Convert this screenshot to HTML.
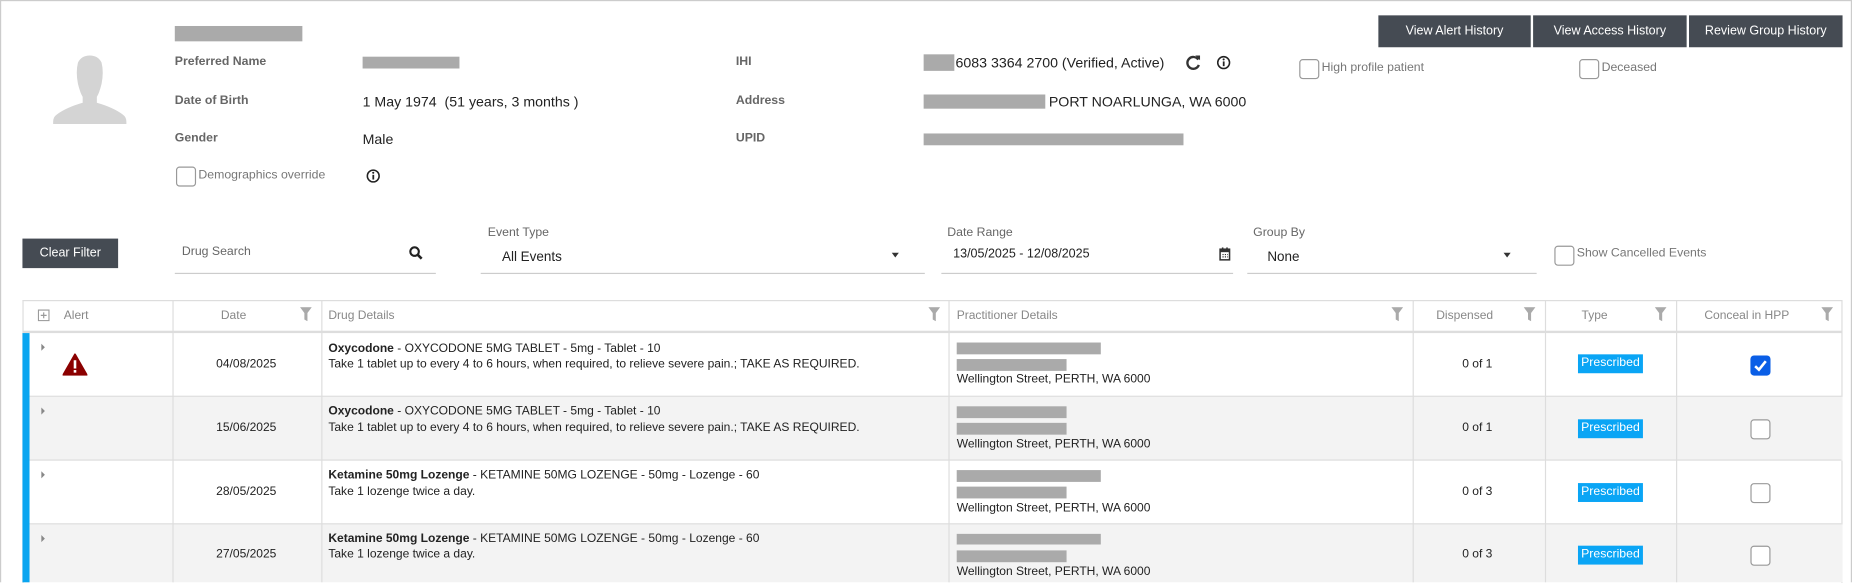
<!DOCTYPE html>
<html><head><meta charset="utf-8"><style>
*{margin:0;padding:0;box-sizing:border-box}
html,body{width:1852px;height:582px;overflow:hidden;background:#fff}
#w{position:absolute;left:0;top:0;width:1568px;height:493px;transform:scale(1.18112);transform-origin:0 0;font-family:"Liberation Sans",Arial,sans-serif;font-size:10.4px;color:#222}
.a{position:absolute;white-space:nowrap}
.bar{position:absolute;background:#aaa}
.lbl{position:absolute;font-weight:bold;color:#666;font-size:10.4px;white-space:nowrap}
.val{position:absolute;font-size:12px;color:#222;white-space:nowrap}
.btn{position:absolute;background:#454b53;color:#fff;font-size:10.6px;text-align:center;line-height:27px;top:13px;height:27px}
.cb{position:absolute;width:17px;height:17px;border:1px solid #999;border-radius:3px;background:#fff}
.cbt{position:absolute;font-size:10.4px;color:#777;white-space:nowrap}
.ul{position:absolute;height:1px;background:#ccc;top:231px}
.fl{position:absolute;font-size:10.4px;color:#666}
.col{position:absolute;top:254px;bottom:0;width:1px;background:#ddd}
.hd{position:absolute;top:262px;color:#888;font-size:10.2px}
.fi{position:absolute;top:260px;width:10px;height:12px}
.row{position:absolute;left:19px;width:1540px;border-top:1px solid #ddd}
.d{position:absolute;font-size:10.2px;color:#222;white-space:nowrap}
.badge{position:absolute;left:1336px;width:55px;height:16px;background:#0aa5f5;color:#fff;font-size:10.4px;text-align:center;line-height:16px}
</style></head><body><div id="w">
<div class="a" style="left:0;top:0;width:1568px;height:493px;border:1px solid #ccc;border-bottom:none"></div>
<div class="bar" style="left:148px;top:22px;width:108px;height:13px"></div>
<svg class="a" style="left:44px;top:41px" width="64" height="64" viewBox="0 0 64 64"><path fill="#d4d4d4" d="M22 30 Q20 20 22 12 Q25 6 32 6 Q39 6 42 12 Q44 20 42 30 Q40 38 38 41 L38 46 Q52 50 60 56 Q63 58 63 62 L63 64 L1 64 L1 62 Q1 58 4 56 Q12 50 26 46 L26 41 Q24 38 22 30Z"/></svg>
<div class="lbl" style="left:148px;top:47px">Preferred Name</div>
<div class="lbl" style="left:148px;top:80px">Date of Birth</div>
<div class="lbl" style="left:148px;top:112px">Gender</div>
<div class="bar" style="left:307px;top:48px;width:82px;height:10px"></div>
<div class="val" style="left:307px;top:79px">1 May 1974&nbsp; (51 years, 3 months )</div>
<div class="val" style="left:307px;top:111px">Male</div>
<div class="cb" style="left:149px;top:141px"></div>
<div class="cbt" style="left:168px;top:143px">Demographics override</div>
<svg class="a" style="left:310px;top:143px" width="12" height="12" viewBox="0 0 12 12"><circle cx="6" cy="6" r="5" fill="none" stroke="#222" stroke-width="1.3"/><rect x="5.3" y="5" width="1.5" height="4" fill="#222"/><circle cx="6" cy="3.3" r=".9" fill="#222"/></svg>
<div class="lbl" style="left:623px;top:47px">IHI</div>
<div class="lbl" style="left:623px;top:80px">Address</div>
<div class="lbl" style="left:623px;top:112px">UPID</div>
<div class="bar" style="left:782px;top:46px;width:26px;height:14px"></div>
<div class="val" style="left:809px;top:46px">6083 3364 2700 (Verified, Active)</div>
<svg class="a" style="left:1004px;top:46px" width="13" height="14" viewBox="0 0 13 14"><path d="M10.5 4.5 A5 5 0 1 0 11 9" fill="none" stroke="#333" stroke-width="2"/><path d="M8 1 L12 1 L12 5Z" fill="#333"/></svg>
<svg class="a" style="left:1030px;top:47px" width="12" height="12" viewBox="0 0 12 12"><circle cx="6" cy="6" r="5" fill="none" stroke="#222" stroke-width="1.3"/><rect x="5.3" y="5" width="1.5" height="4" fill="#222"/><circle cx="6" cy="3.3" r=".9" fill="#222"/></svg>
<div class="bar" style="left:782px;top:80px;width:103px;height:12px"></div>
<div class="val" style="left:888px;top:79px">PORT NOARLUNGA, WA 6000</div>
<div class="bar" style="left:782px;top:113px;width:220px;height:10px"></div>
<div class="cb" style="left:1100px;top:50px"></div>
<div class="cbt" style="left:1119px;top:52px">High profile patient</div>
<div class="cb" style="left:1337px;top:50px"></div>
<div class="cbt" style="left:1356px;top:52px">Deceased</div>
<div class="btn" style="left:1167px;width:129px">View Alert History</div>
<div class="btn" style="left:1298px;width:130px">View Access History</div>
<div class="btn" style="left:1430px;width:130px">Review Group History</div>
<div class="btn" style="left:19px;top:202px;width:81px;height:25px;line-height:25px">Clear Filter</div>
<div class="fl" style="left:154px;top:208px;color:#666">Drug Search</div>
<svg class="a" style="left:346px;top:208px" width="12" height="12" viewBox="0 0 12 12"><circle cx="5" cy="5" r="3.6" fill="none" stroke="#222" stroke-width="1.8"/><path d="M7.5 7.5 L11 11" stroke="#222" stroke-width="2.2"/></svg>
<div class="ul" style="left:148px;width:221px"></div>
<div class="fl" style="left:413px;top:192px">Event Type</div>
<div class="val" style="left:425px;top:212px;font-size:11.4px">All Events</div>
<div class="a" style="left:755px;top:214px;border:3.5px solid transparent;border-top:4px solid #333;width:0;height:0"></div>
<div class="ul" style="left:407px;width:376px"></div>
<div class="fl" style="left:802px;top:192px">Date Range</div>
<div class="val" style="left:807px;top:209px;font-size:10.6px">13/05/2025 - 12/08/2025</div>
<svg class="a" style="left:1032px;top:209px" width="10" height="12" viewBox="0 0 10 12"><rect x="1" y="2" width="8" height="9" fill="none" stroke="#333" stroke-width="1.3"/><rect x="1" y="2" width="8" height="2.5" fill="#333"/><rect x="2.5" y="0.5" width="1.3" height="2.5" fill="#333"/><rect x="6.2" y="0.5" width="1.3" height="2.5" fill="#333"/><path d="M3 6.5h1M5 6.5h1M7 6.5h.6M3 8.5h1M5 8.5h1M7 8.5h.6" stroke="#333"/></svg>
<div class="ul" style="left:797px;width:247px"></div>
<div class="fl" style="left:1061px;top:192px">Group By</div>
<div class="val" style="left:1073px;top:212px;font-size:11.4px">None</div>
<div class="a" style="left:1273px;top:214px;border:3.5px solid transparent;border-top:4px solid #333;width:0;height:0"></div>
<div class="ul" style="left:1056px;width:245px"></div>
<div class="cb" style="left:1316px;top:208px"></div>
<div class="cbt" style="left:1335px;top:209px">Show Cancelled Events</div>

<div class="a" style="left:19px;top:254px;width:1541px;height:240px;border:1px solid #ddd;border-bottom:none"></div>
<div class="a" style="left:19px;top:280px;width:1541px;height:2px;background:#ddd"></div>
<div class="a" style="left:19px;top:336px;width:1541px;height:54px;background:#f3f3f3"></div>
<div class="a" style="left:19px;top:444px;width:1541px;height:49px;background:#f3f3f3"></div>
<div class="row" style="top:335px"></div><div class="row" style="top:389px"></div><div class="row" style="top:443px"></div>
<div class="col" style="left:146px"></div><div class="col" style="left:272px"></div><div class="col" style="left:803px"></div><div class="col" style="left:1196px"></div><div class="col" style="left:1308px"></div><div class="col" style="left:1419px"></div>
<div class="a" style="left:19px;top:282px;width:6px;height:211px;background:#0aa5f0"></div>
<svg class="a" style="left:32px;top:262px" width="10" height="10" viewBox="0 0 10 10"><rect x=".5" y=".5" width="9" height="9" fill="none" stroke="#999"/><path d="M5 2.5v5M2.5 5h5" stroke="#999"/></svg>
<div class="hd" style="left:54px">Alert</div>
<div class="hd" style="left:187px">Date</div>
<div class="hd" style="left:278px">Drug Details</div>
<div class="hd" style="left:810px">Practitioner Details</div>
<div class="hd" style="left:1216px">Dispensed</div>
<div class="hd" style="left:1339px">Type</div>
<div class="hd" style="left:1443px">Conceal in HPP</div>
<svg width="0" height="0" style="position:absolute"><defs><symbol id="f" viewBox="0 0 10 12"><path d="M0 0H10L6.3 5V12L3.7 10.5V5Z" fill="#aaa"/></symbol></defs></svg>
<svg class="fi" style="left:254px"><use href="#f"/></svg>
<svg class="fi" style="left:786px"><use href="#f"/></svg>
<svg class="fi" style="left:1178px"><use href="#f"/></svg>
<svg class="fi" style="left:1290px"><use href="#f"/></svg>
<svg class="fi" style="left:1401px"><use href="#f"/></svg>
<svg class="fi" style="left:1542px"><use href="#f"/></svg>
<svg class="a" style="left:53px;top:299px" width="21" height="19" viewBox="0 0 21 19"><path d="M10.5 1 L20.5 18.5 L0.5 18.5Z" fill="#8b0000" stroke="#8b0000" stroke-linejoin="round" stroke-width="1.5"/><rect x="9.4" y="6" width="2.2" height="7" fill="#fff"/><rect x="9.4" y="14.3" width="2.2" height="2.2" fill="#fff"/></svg>

<div class="a" style="left:35px;top:291px;border:3px solid transparent;border-left:3.5px solid #888;width:0;height:0"></div>
<div class="d" style="left:183px;top:303px">04/08/2025</div>
<div class="d" style="left:278px;top:290px"><b>Oxycodone</b> - OXYCODONE 5MG TABLET - 5mg - Tablet - 10</div>
<div class="d" style="left:278px;top:303px">Take 1 tablet up to every 4 to 6 hours, when required, to relieve severe pain.; TAKE AS REQUIRED.</div>
<div class="bar" style="left:810px;top:290px;width:122px;height:10px"></div>
<div class="bar" style="left:810px;top:304px;width:93px;height:10px"></div>
<div class="d" style="left:810px;top:316px">Wellington Street, PERTH, WA 6000</div>
<div class="d" style="left:1238px;top:303px">0 of 1</div>
<div class="badge" style="top:300px">Prescribed</div>
<div class="a" style="left:1482px;top:301px;width:17px;height:17px;background:#0a5ee6;border-radius:3px"></div>
<svg class="a" style="left:1482px;top:301px" width="17" height="17" viewBox="0 0 17 17"><path d="M4 9 L7.2 12 L13 4.8" fill="none" stroke="#fff" stroke-width="2.2"/></svg>

<div class="a" style="left:35px;top:345px;border:3px solid transparent;border-left:3.5px solid #888;width:0;height:0"></div>
<div class="d" style="left:183px;top:357px">15/06/2025</div>
<div class="d" style="left:278px;top:343px"><b>Oxycodone</b> - OXYCODONE 5MG TABLET - 5mg - Tablet - 10</div>
<div class="d" style="left:278px;top:357px">Take 1 tablet up to every 4 to 6 hours, when required, to relieve severe pain.; TAKE AS REQUIRED.</div>
<div class="bar" style="left:810px;top:344px;width:93px;height:10px"></div>
<div class="bar" style="left:810px;top:358px;width:93px;height:10px"></div>
<div class="d" style="left:810px;top:371px">Wellington Street, PERTH, WA 6000</div>
<div class="d" style="left:1238px;top:357px">0 of 1</div>
<div class="badge" style="top:355px">Prescribed</div>
<div class="cb" style="left:1482px;top:355px"></div>

<div class="a" style="left:35px;top:399px;border:3px solid transparent;border-left:3.5px solid #888;width:0;height:0"></div>
<div class="d" style="left:183px;top:411px">28/05/2025</div>
<div class="d" style="left:278px;top:397px"><b>Ketamine 50mg Lozenge</b> - KETAMINE 50MG LOZENGE - 50mg - Lozenge - 60</div>
<div class="d" style="left:278px;top:411px">Take 1 lozenge twice a day.</div>
<div class="bar" style="left:810px;top:398px;width:122px;height:10px"></div>
<div class="bar" style="left:810px;top:412px;width:93px;height:10px"></div>
<div class="d" style="left:810px;top:425px">Wellington Street, PERTH, WA 6000</div>
<div class="d" style="left:1238px;top:411px">0 of 3</div>
<div class="badge" style="top:409px">Prescribed</div>
<div class="cb" style="left:1482px;top:409px"></div>

<div class="a" style="left:35px;top:453px;border:3px solid transparent;border-left:3.5px solid #888;width:0;height:0"></div>
<div class="d" style="left:183px;top:464px">27/05/2025</div>
<div class="d" style="left:278px;top:451px"><b>Ketamine 50mg Lozenge</b> - KETAMINE 50MG LOZENGE - 50mg - Lozenge - 60</div>
<div class="d" style="left:278px;top:464px">Take 1 lozenge twice a day.</div>
<div class="bar" style="left:810px;top:452px;width:122px;height:9px"></div>
<div class="bar" style="left:810px;top:466px;width:93px;height:10px"></div>
<div class="d" style="left:810px;top:479px">Wellington Street, PERTH, WA 6000</div>
<div class="d" style="left:1238px;top:464px">0 of 3</div>
<div class="badge" style="top:462px">Prescribed</div>
<div class="cb" style="left:1482px;top:462px"></div>
</div></body></html>
